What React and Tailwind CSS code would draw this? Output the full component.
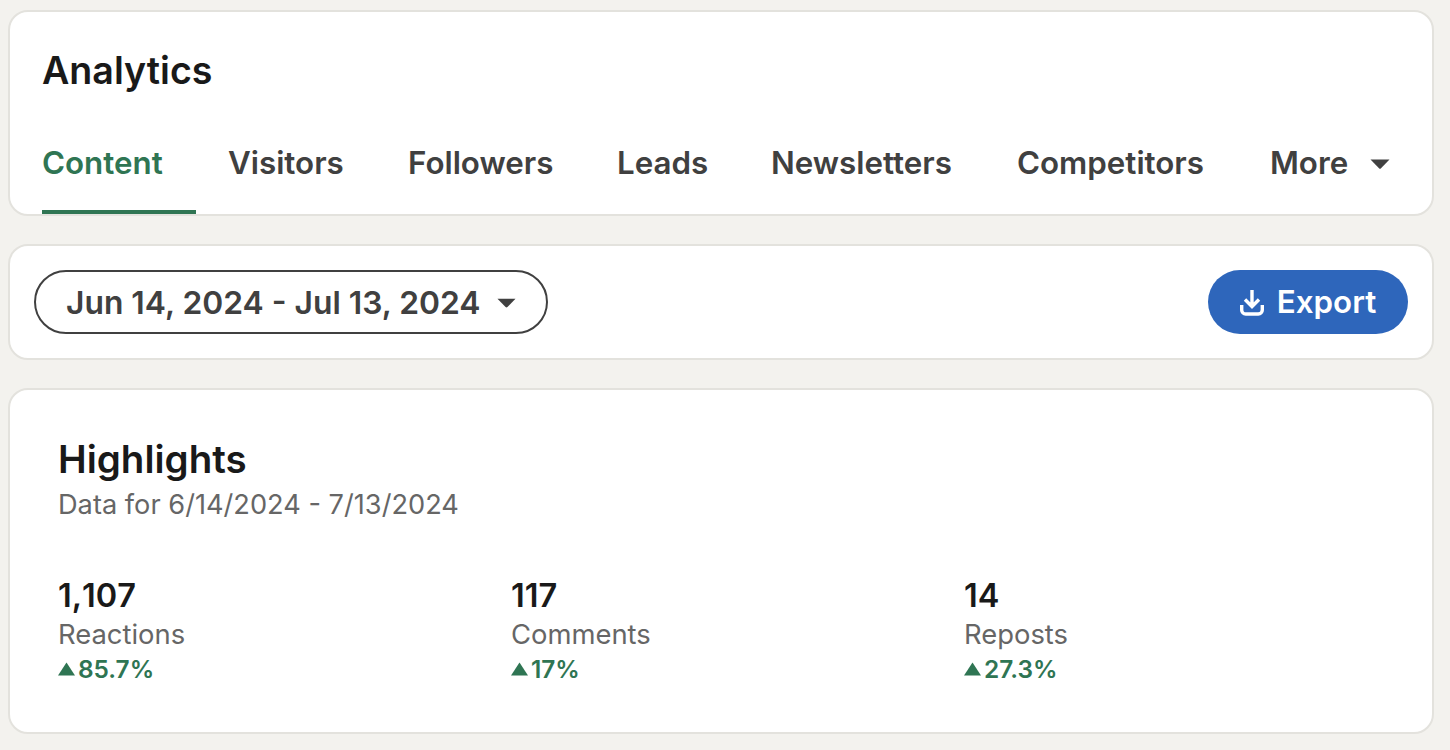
import React from 'react'

const tabs = [
  { name: 'Visitors', size: 'w-[179px] pl-[32px]' },
  { name: 'Followers', size: 'w-[209px] pl-[33px]' },
  { name: 'Leads', size: 'w-[154px] pl-[33px]' },
  { name: 'Newsletters', size: 'w-[246px] pl-[33px]' },
  { name: 'Competitors', size: 'w-[253px] pl-[33px]' },
]

const stats = [
  { value: '1,107', label: 'Reactions', change: '85.7%' },
  { value: '117', label: 'Comments', change: '17%' },
  { value: '14', label: 'Reposts', change: '27.3%' },
]

function Caret({ className }){
  return (
    <svg viewBox="0 0 20 10" className={className} fill="currentColor">
      <path d="M0.5 0.5h19L11 9.2a1.4 1.4 0 0 1-2 0z" />
    </svg>
  )
}

function Stat({ value, label, change }){
  return (
    <div className="flex flex-col">
      <div className="text-[32.5px] leading-[40px] font-semibold text-[#191919] [font-kerning:none]">{value}</div>
      <div className="text-[27.4px] leading-[36px] text-[#666666]">{label}</div>
      <div className="flex items-center gap-[3px] text-[24.4px] leading-[34px] font-semibold text-[#2f7553]">
        <svg viewBox="0 0 17 14" className="w-[17px] h-[14px]" fill="currentColor"><path d="M8.5 0.5 17 13.5H0z" /></svg>
        {change}
      </div>
    </div>
  )
}

export default function App(){
  return (
    <div className="w-[1450px] h-[750px] overflow-hidden bg-[#f3f2ee] pl-[8px] pr-[16px] pt-[10px] flex flex-col gap-[28px] font-['Inter',sans-serif]">
      <div className="h-[206px] shrink-0 bg-white rounded-[20px] border-2 border-[#e3e2dd] flex flex-col overflow-hidden">
        <h1 className="pl-[32px] pt-[35px] text-[37.6px] leading-[48px] font-semibold text-[#191919]">Analytics</h1>
        <div className="mt-auto flex pl-[32px] text-[31.3px] font-semibold text-[#404040]">
          <div className="h-[85px] w-[154px] flex items-center border-b-4 border-[#2f7553] text-[#2f7553] pb-[12px]">Content</div>
          {tabs.map(t => (
            <div key={t.name} className={`h-[85px] ${t.size} flex items-center pb-[16px]`}>{t.name}</div>
          ))}
          <div className="h-[85px] flex items-center gap-[22px] pl-[33px] pb-[16px]">
            More
            <Caret className="w-[20px] h-[10px]" />
          </div>
        </div>
      </div>

      <div className="h-[116px] shrink-0 bg-white rounded-[20px] border-2 border-[#e3e2dd] flex items-center justify-between pl-[24px] pr-[24px]">
        <button className="h-[64px] w-[514px] rounded-full border-2 border-[#404040] flex items-center gap-[16px] pl-[30px] pt-[2px] text-[31.8px] font-semibold text-[#404040]">
          Jun 14, 2024 - Jul 13, 2024
          <Caret className="w-[19px] h-[10px]" />
        </button>
        <button className="h-[64px] w-[200px] rounded-full bg-[#2e66bb] flex items-center justify-center gap-[13px] pt-[1px] text-[31.3px] font-semibold text-white">
          <svg viewBox="0 0 24 26" className="w-[24px] h-[26px]" fill="none" stroke="currentColor" strokeWidth="3.4">
            <path d="M12 0v16M5 9.5l7 7 7-7" />
            <path d="M1.7 15v5a4 4 0 0 0 4 4h12.6a4 4 0 0 0 4-4V15" />
          </svg>
          Export
        </button>
      </div>

      <div className="h-[346px] shrink-0 bg-white rounded-[20px] border-2 border-[#e3e2dd] pl-[48px] pt-[45px]">
        <h2 className="text-[38.5px] leading-[48px] font-semibold text-[#191919]">Highlights</h2>
        <p className="text-[27.2px] leading-[43px] text-[#666666]">Data for 6/14/2024 - 7/13/2024</p>
        <div className="mt-[50px] grid grid-cols-[453px_453px_1fr]">
          {stats.map(s => <Stat key={s.label} {...s} />)}
        </div>
      </div>
    </div>
  )
}
